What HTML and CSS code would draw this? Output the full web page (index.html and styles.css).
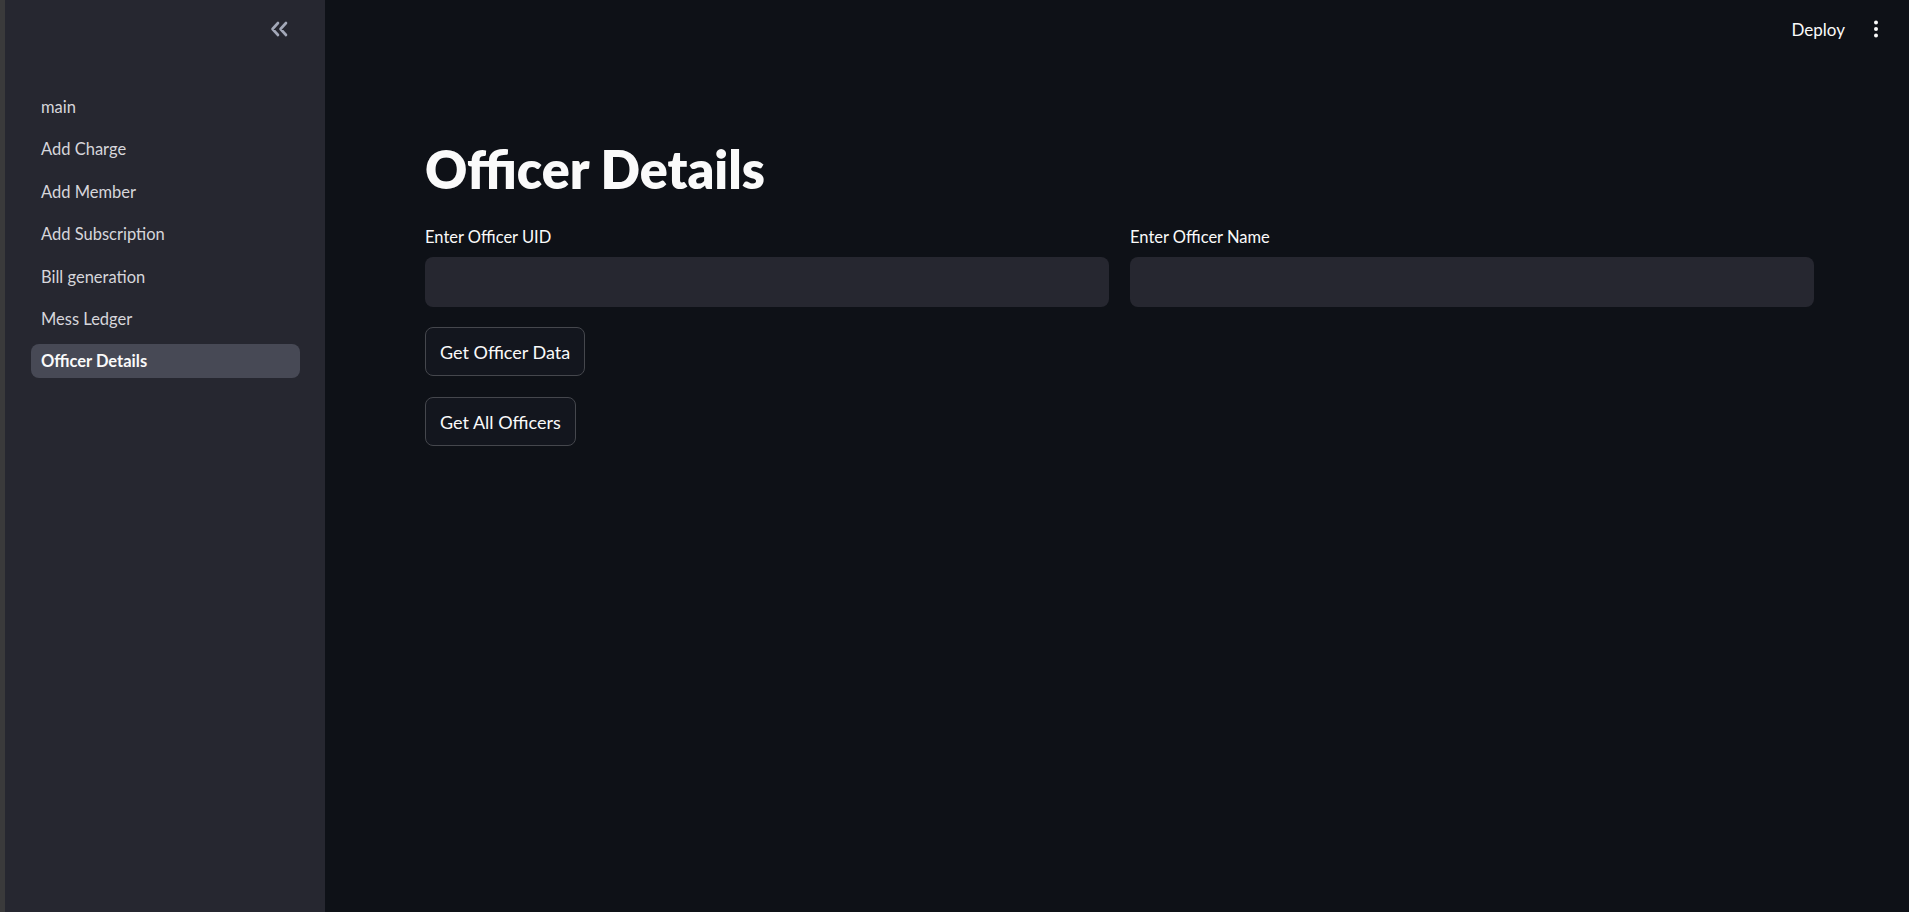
FILE: index.html
```html
<!DOCTYPE html>
<html>
<head>
<meta charset="utf-8">
<link rel="stylesheet" href="styles.css">
</head>
<body>
<div class="app">
  <div class="edge"></div>
  <aside class="sidebar">
    <div class="side-head">
      <svg class="collapse" viewBox="0 0 18 16" width="18" height="16">
        <path d="M8 2 L2.5 8 L8 14 M16 2 L10.5 8 L16 14" fill="none" stroke="#a3a8b8" stroke-width="2.6" stroke-linecap="round" stroke-linejoin="round"/>
      </svg>
    </div>
    <nav class="nav">
      <a class="nav-item">main</a>
      <a class="nav-item">Add Charge</a>
      <a class="nav-item">Add Member</a>
      <a class="nav-item">Add Subscription</a>
      <a class="nav-item">Bill generation</a>
      <a class="nav-item">Mess Ledger</a>
      <a class="nav-item active">Officer Details</a>
    </nav>
  </aside>
  <main class="main">
    <header class="topbar">
      <span class="deploy">Deploy</span>
      <svg class="kebab" viewBox="0 0 6 18" width="6" height="18">
        <circle cx="3" cy="2.5" r="2" fill="#fafafa"/>
        <circle cx="3" cy="9" r="2" fill="#fafafa"/>
        <circle cx="3" cy="15.5" r="2" fill="#fafafa"/>
      </svg>
    </header>
    <section class="content">
      <h1 class="title">Officer Details</h1>
      <div class="fields">
        <div class="field">
          <label class="label">Enter Officer UID</label>
          <div class="input"></div>
        </div>
        <div class="field">
          <label class="label">Enter Officer Name</label>
          <div class="input"></div>
        </div>
      </div>
      <button class="btn">Get Officer Data</button>
      <button class="btn">Get All Officers</button>
    </section>
  </main>
</div>
</body>
</html>
```

FILE: styles.css
```css
html, body {
  margin: 0;
  padding: 0;
  height: 100%;
  background: #0e1117;
  font-family: Lato, "Open Sans", sans-serif;
}
.app {
  display: flex;
  height: 100vh;
}
.edge {
  width: 5px;
  background: #3a3a3b;
  flex: none;
}
.sidebar {
  width: 320px;
  flex: none;
  background: #262730;
  display: flex;
  flex-direction: column;
}
.side-head {
  height: 90px;
  display: flex;
  justify-content: flex-end;
  align-items: flex-start;
  padding-right: 37px;
  box-sizing: border-box;
}
.collapse {
  margin-top: 21px;
}
.nav {
  display: flex;
  flex-direction: column;
  gap: 8.4px;
  padding-left: 26px;
}
.nav-item {
  width: 269px;
  height: 34px;
  box-sizing: border-box;
  padding-left: 10px;
  display: flex;
  align-items: center;
  border-radius: 8px;
  color: #d6d6db;
  font-size: 16.5px;
}
.nav-item.active {
  background: #474955;
  color: #fafafa;
  font-weight: 700;
}
.main {
  flex: 1;
  display: flex;
  flex-direction: column;
}
.topbar {
  height: 58px;
  display: flex;
  justify-content: flex-end;
  align-items: center;
  padding-right: 30px;
  gap: 28px;
}
.deploy {
  color: #fafafa;
  font-size: 17px;
}
.content {
  padding: 80px 95px 0 100px;
  display: flex;
  flex-direction: column;
  align-items: flex-start;
}
.title {
  margin: 0;
  color: #fafafa;
  font-size: 52px;
  font-weight: 800;
  line-height: 62px;
}
.fields {
  align-self: stretch;
  display: grid;
  grid-template-columns: 1fr 1fr;
  gap: 21px;
  margin-top: 27px;
}
.field {
  display: flex;
  flex-direction: column;
}
.label {
  color: #fafafa;
  font-size: 16.5px;
  line-height: 20px;
  margin-bottom: 10px;
}
.input {
  height: 50px;
  background: #262730;
  border-radius: 8px;
}
.btn {
  margin-top: 20px;
  height: 49px;
  padding: 0 14px;
  background: #13161e;
  border: 1px solid #45474d;
  border-radius: 8px;
  color: #fafafa;
  font-family: Lato, "Open Sans", sans-serif;
  font-size: 18px;
}
.btn + .btn {
  margin-top: 21px;
}
```
